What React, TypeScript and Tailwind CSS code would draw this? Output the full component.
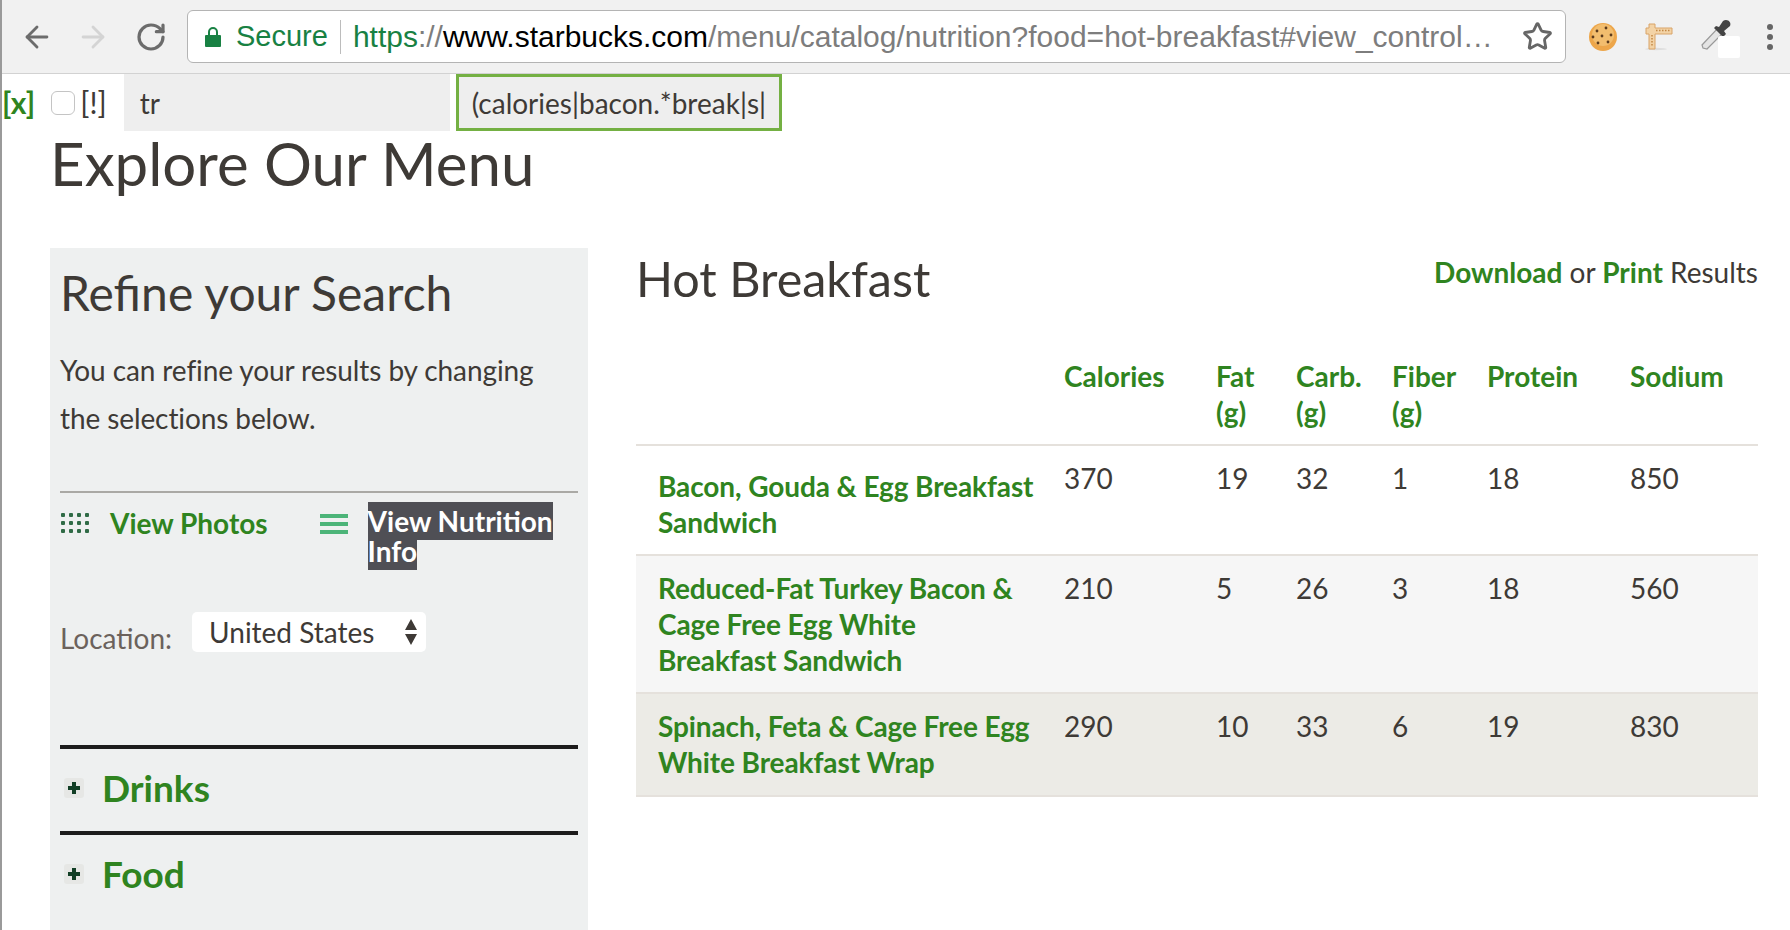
import { ArrowLeft, ArrowRight, RotateCw, Star } from "lucide-react";

const rows = [
  { name: "Bacon, Gouda & Egg Breakfast Sandwich", values: [370, 19, 32, 1, 18, 850], className: "h-[110px] bg-white", namePad: "pt-[22px]" },
  { name: "Reduced-Fat Turkey Bacon & Cage Free Egg White Breakfast Sandwich", values: [210, 5, 26, 3, 18, 560], className: "h-[138px] bg-[#f6f6f6]", namePad: "pt-[14px]" },
  { name: "Spinach, Feta & Cage Free Egg White Breakfast Wrap", values: [290, 10, 33, 6, 19, 830], className: "h-[103px] bg-[#ecebe6]", namePad: "pt-[14px]" },
];

const headers = [
  ["Calories"],
  ["Fat", "(g)"],
  ["Carb.", "(g)"],
  ["Fiber", "(g)"],
  ["Protein"],
  ["Sodium"],
];

function CookieIcon() {
  return (
    <svg width="30" height="30" viewBox="0 0 30 30">
      <circle cx="15" cy="15" r="14" fill="#eda64a" />
      <circle cx="15" cy="13" r="11" fill="#f2bd6e" />
      {[[9, 9], [18, 6], [23, 13], [14, 14], [20, 20], [10, 21], [5, 15]].map(([x, y]) => (
        <circle key={`${x}-${y}`} cx={x} cy={y} r="1.4" fill="#5b3a1c" />
      ))}
    </svg>
  );
}

function RulerIcon() {
  return (
    <svg width="30" height="30" viewBox="0 0 30 30">
      <ellipse cx="12" cy="27" rx="11" ry="1.2" fill="#dedede" />
      <path d="M5 2h6v4h17v6H11v15H5V12H2V6h3z" fill="#f3d3a6" stroke="#d9a468" strokeWidth="1" />
      <path d="M12 8.5h14M8 13v12" stroke="#c28845" strokeWidth="1.5" strokeDasharray="1.5 1.5" />
    </svg>
  );
}

function DropperIcon() {
  return (
    <div className="relative h-[42px] w-[42px]">
      <svg width="34" height="34" viewBox="0 0 34 34">
        <path d="M3 30l-1-3L17 11l5 5L7 31z" fill="#e4e4e4" stroke="#999" strokeWidth="1.2" />
        <path d="M14 10l9 9 3-3-2-3 6-5c2-4-3-8-7-5l-4 6-3-1z" fill="#444" />
      </svg>
      <div className="absolute left-[18px] top-[18px] h-[22px] w-[22px] rounded-[2px] bg-white" />
    </div>
  );
}

function GridIcon() {
  return (
    <svg width="30" height="22" viewBox="0 0 30 22" className="shrink-0" fill="#2f6b46">
      {[1, 9, 17].map((y) =>
        [1, 9, 17, 25].map((x) => <rect key={`${x}-${y}`} x={x} y={y} width="4" height="4" rx="1" />)
      )}
    </svg>
  );
}

function BarsIcon() {
  return (
    <svg width="28" height="22" viewBox="0 0 28 22" className="shrink-0" fill="#4cb478">
      <rect y="1" width="28" height="4" />
      <rect y="9" width="28" height="4" />
      <rect y="17" width="28" height="4" />
    </svg>
  );
}

function PlusIcon() {
  return (
    <div className="flex h-5 w-5 shrink-0 items-center justify-center rounded-[3px] bg-[#e6e7e5]">
      <svg width="12" height="12" viewBox="0 0 12 12" fill="#123f26">
        <path d="M4 0h4v4h4v4H8v4H4V8H0V4h4z" />
      </svg>
    </div>
  );
}

function Category({ label }: { label: string }) {
  return (
    <div className="flex h-[86px] items-center border-t-4 border-[#1c1c1c] pb-[4px] pl-[4px]">
      <PlusIcon />
      <span className="ml-[18px] text-[37px] font-bold text-[#2f8420]">{label}</span>
    </div>
  );
}

export default function App() {
  return (
    <div className="h-[930px] w-[1790px] overflow-hidden border-l-2 border-[#9a9a9a] bg-white font-['Lato',sans-serif] text-[#3e3a36]">
      {/* browser chrome */}
      <div className="flex h-[74px] items-center border-b border-[#d2d2d2] bg-[#f1f1f1] pl-[18px]">
        <ArrowLeft size={34} strokeWidth={2} className="text-[#6c6c6c]" />
        <ArrowRight size={34} strokeWidth={2} className="ml-[22px] text-[#d4d4d4]" />
        <RotateCw size={32} strokeWidth={2.4} className="ml-[25px] text-[#6c6c6c]" />
        <div className="ml-[20px] flex h-[53px] w-[1379px] items-center rounded-[6px] border border-[#b4b4b4] bg-white pl-[17px] pr-[12px] font-['Liberation_Sans',sans-serif]">
          <svg width="16" height="22" viewBox="0 0 16 22" className="shrink-0" fill="#188143">
            <path d="M1 9h14a1 1 0 0 1 1 1v10a1 1 0 0 1-1 1H1a1 1 0 0 1-1-1V10a1 1 0 0 1 1-1z" />
            <path d="M4 9V6a4 4 0 0 1 8 0v3" fill="none" stroke="#188143" strokeWidth="2" />
          </svg>
          <span className="ml-[15px] text-[29px] text-[#188143]">Secure</span>
          <div className="mx-[12px] h-[34px] w-px bg-[#bcbcbc]" />
          <div className="min-w-0 flex-1 truncate text-[30px] text-[#7d7d7d]">
            <span className="text-[#188143]">https</span>://
            <span className="text-black">www.starbucks.com</span>/menu/catalog/nutrition?food=hot-breakfast#view_control…
          </div>
          <Star size={31} strokeWidth={2.2} className="ml-[20px] shrink-0 text-[#666]" />
        </div>
        <div className="ml-[22px]"><CookieIcon /></div>
        <div className="ml-[26px]"><RulerIcon /></div>
        <div className="ml-[26px] mt-[4px]"><DropperIcon /></div>
        <div className="ml-[25px] flex flex-col gap-[4px]">
          <div className="h-[6px] w-[6px] rounded-full bg-[#666]" />
          <div className="h-[6px] w-[6px] rounded-full bg-[#666]" />
          <div className="h-[6px] w-[6px] rounded-full bg-[#666]" />
        </div>
      </div>

      {/* filter bar */}
      <div className="flex h-[57px] items-center text-[28px]">
        <span className="text-[30px] font-bold text-[#2f8420]">[x]</span>
        <div className="ml-[16px] h-[24px] w-[24px] rounded-[6px] border border-[#c4c4c4] bg-white" />
        <span className="ml-[5px] text-[30px]">[!]</span>
        <div className="ml-[17px] flex h-full w-[326px] items-center bg-[#eeeeee] pl-[16px]">tr</div>
        <div className="ml-[6px] flex h-full w-[326px] items-center overflow-hidden whitespace-nowrap border-[3px] border-[#74b043] bg-[#eeeeee] pl-[13px] pr-[12px]">
          <span className="overflow-hidden">(calories|bacon.*break|s|</span>
        </div>
      </div>

      <div className="pl-[48px]">
        <h1 className="h-[117px] text-[60px] leading-[64px]">Explore Our Menu</h1>

        <div className="flex items-start">
          {/* sidebar */}
          <aside className="h-[700px] w-[538px] shrink-0 bg-[#eef0f0] px-[10px]">
            <h2 className="pt-[15px] text-[48px] leading-[60px]">Refine your Search</h2>
            <p className="mt-[23px] h-[147px] border-b-2 border-[#aaa9a5] text-[28px] leading-[48px] tracking-[-0.1px]">
              You can refine your results by changing the selections below.
            </p>
            <div className="flex h-[119px] items-start pt-[13px] text-[28px] font-bold leading-[30px]">
              <div className="mt-[6px]"><GridIcon /></div>
              <span className="ml-[20px] mt-[2px] text-[#2f8420]">View Photos</span>
              <div className="ml-[52px] mt-[7px]"><BarsIcon /></div>
              <span className="ml-[20px] w-[190px] text-white">
                <span className="bg-[#4f4f55] py-[2px] [box-decoration-break:clone]">View Nutrition Info</span>
              </span>
            </div>
            <div className="flex h-[133px] items-start">
              <span className="mt-[6px] text-[28px] leading-[40px] text-[#6b625c]">Location:</span>
              <div className="ml-[20px] flex h-[40px] w-[234px] items-center justify-between rounded-[5px] bg-white pl-[17px] pr-[8px] text-[28px]">
                United States
                <svg width="14" height="26" viewBox="0 0 14 26" fill="#3e3a36">
                  <path d="M7 0l6 11H1zM7 26L1 15h12z" />
                </svg>
              </div>
            </div>
            <Category label="Drinks" />
            <Category label="Food" />
          </aside>

          {/* results */}
          <main className="ml-[48px] w-[1122px]">
            <div className="flex items-start justify-between">
              <h2 className="text-[48.5px] leading-[60px]">Hot Breakfast</h2>
              <div className="mt-[6px] text-[28px] leading-[36px]">
                <b className="text-[#2f8420]">Download</b> or <b className="text-[#2f8420]">Print</b> Results
              </div>
            </div>
            <table className="mt-[43px] w-full table-fixed border-collapse text-left text-[28px]">
              <colgroup>
                <col className="w-[428px]" />
                <col className="w-[152px]" />
                <col className="w-[80px]" />
                <col className="w-[96px]" />
                <col className="w-[95px]" />
                <col className="w-[143px]" />
                <col />
              </colgroup>
              <thead>
                <tr className="h-[94px] border-b-2 border-[#e5e1dc]">
                  <th />
                  {headers.map((lines) => (
                    <th key={lines[0]} className="pb-[5px] pt-[7px] align-top font-bold leading-[36px] text-[#2f8420]">
                      {lines.map((line) => (
                        <div key={line}>{line}</div>
                      ))}
                    </th>
                  ))}
                  <th />
                </tr>
              </thead>
              <tbody>
                {rows.map((row) => (
                  <tr key={row.name} className={`${row.className} border-b-2 border-[#e5e1dc]`}>
                    <td className={`${row.namePad} pl-[22px] pr-[26px] align-top font-bold leading-[36px] tracking-[-0.1px] text-[#2f8420]`}>
                      {row.name}
                    </td>
                    {row.values.map((value, i) => (
                      <td key={i} className="pt-[14px] align-top leading-[36px]">
                        {value}
                      </td>
                    ))}
                    <td />
                  </tr>
                ))}
              </tbody>
            </table>
          </main>
        </div>
      </div>
    </div>
  );
}
